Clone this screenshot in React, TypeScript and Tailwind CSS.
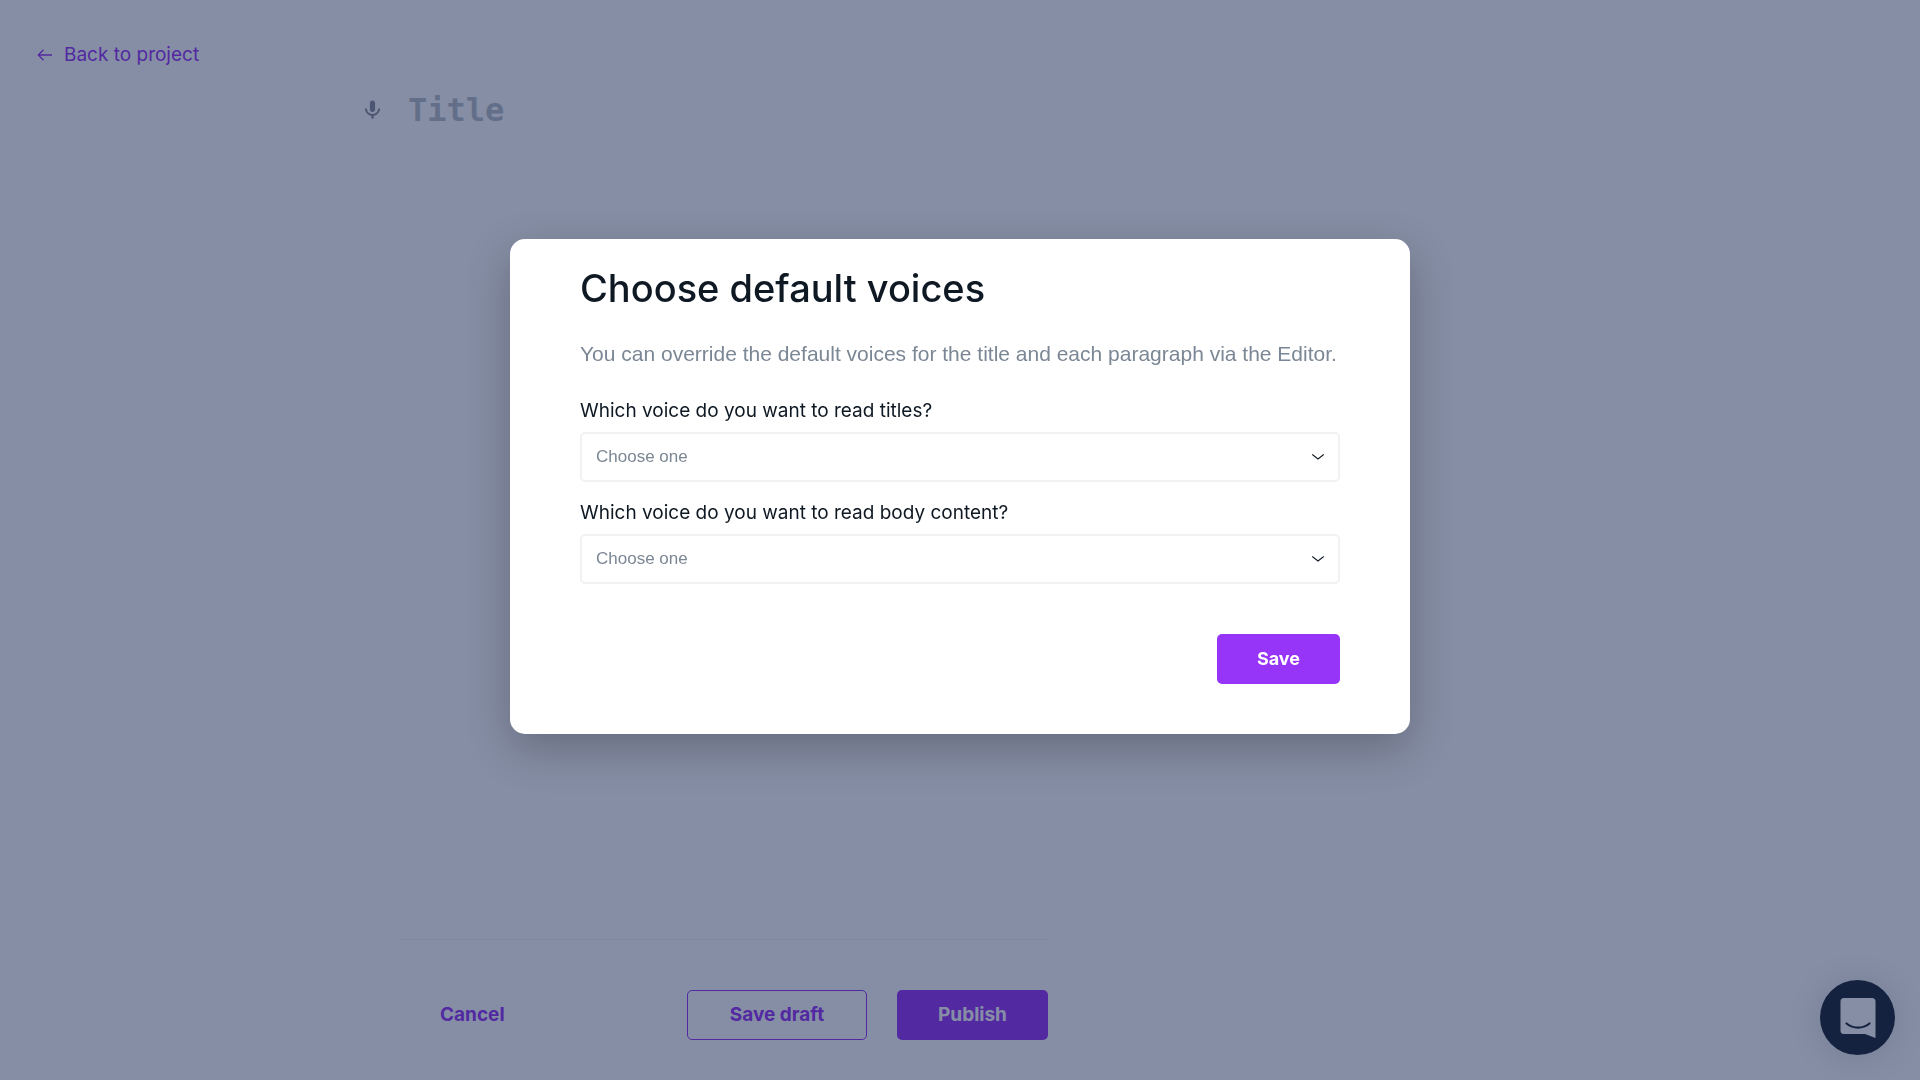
import { useState } from "react";

const voices = ["Joanna", "Matthew", "Amy"];

function ArrowLeftIcon() {
    return (
        <svg className="h-4 w-4" viewBox="0 0 16 16" fill="none" stroke="currentColor" strokeWidth="1.3" aria-hidden="true">
            <path d="M16 8H2.500M7.500 2.800L2.300 8L7.500 13.200" />
        </svg>
    );
}

function MicIcon() {
    return (
        <svg className="h-6 w-6" viewBox="0 0 24 24" fill="currentColor" aria-hidden="true">
            <path d="M12.500 14c1.600 0 2.600-1.200 2.600-2.800V5.300c0-1.600-1-2.800-2.600-2.800S9.900 3.700 9.900 5.300v5.900c0 1.600 1 2.800 2.600 2.800zM18 10.500c0 3.200-2.400 5.500-5.500 5.500S7 13.700 7 10.500H4.900c0 3.700 2.900 6.700 6.400 7.300V20.500h2.400v-2.700c3.500-.6 6.400-3.600 6.400-7.300z" />
        </svg>
    );
}

function ChatIcon() {
    return (
        <svg className="h-10 w-9" viewBox="0 0 36 40" aria-hidden="true">
            <path fill="#fff" d="M4 0h28a3.500 3.500 0 0 1 3.500 3.500V40L25 36H4a3.500 3.500 0 0 1-3.500-3.500v-29A3.500 3.500 0 0 1 4 0z" />
            <path fill="none" stroke="#1b2735" strokeWidth="2.2" strokeLinecap="round" d="M6.500 25.500c7 5.500 16 5.500 23 0" />
        </svg>
    );
}

function VoiceSelect({ id, label }: { id: string; label: string }) {
    const [voice, setVoice] = useState("");

    return (
        <div className="flex flex-col gap-2">
            <label htmlFor={id} className="font-['Inter',sans-serif] text-[19px] leading-[26px] text-[#0f1923]">{label}</label>
            <div className="relative">
                <select
                    id={id}
                    value={voice}
                    onChange={(e) => setVoice(e.target.value)}
                    className="h-[50px] w-full appearance-none rounded-[5px] border-2 border-[#f2f2f3] bg-white px-[14px] text-[17px] text-[#7b8794]"
                >
                    <option value="">Choose one</option>
                    {voices.map((v) => (
                        <option key={v} value={v}>{v}</option>
                    ))}
                </select>
                <svg className="pointer-events-none absolute top-1/2 right-4 h-2 w-3 -translate-y-1/2" viewBox="0 0 12 8" fill="none" stroke="#0f1923" strokeWidth="1.2" aria-hidden="true">
                    <path d="M.2 1.500L6 5.900L11.800 1.500" />
                </svg>
            </div>
        </div>
    );
}

function DefaultVoicesModal() {
    return (
        <div className="fixed inset-0 flex items-center justify-center bg-[#0d1d4b]/50 pb-[108px]">
            <div role="dialog" aria-modal="true" aria-labelledby="voices-title" className="w-full max-w-[900px] rounded-[15px] bg-white px-[70px] pt-[29px] pb-[50px] shadow-[0_15px_45px_rgba(0,0,0,0.24)]">
                <h2 id="voices-title" className="font-['Inter',sans-serif] text-[38px] leading-10 font-medium text-[#0f1923]">Choose default voices</h2>
                <p className="mt-8 text-[21px] leading-7 text-[#7b8794]">You can override the default voices for the title and each paragraph via the Editor.</p>
                <form className="mt-[30px] flex flex-col gap-[18px]" onSubmit={(e) => e.preventDefault()}>
                    <VoiceSelect id="title-voice" label="Which voice do you want to read titles?" />
                    <VoiceSelect id="body-voice" label="Which voice do you want to read body content?" />
                    <button type="submit" className="mt-8 h-[50px] self-end rounded-[5px] bg-[#9635f7] px-10 font-['Inter',sans-serif] text-lg font-bold text-white">Save</button>
                </form>
            </div>
        </div>
    );
}

function App() {
    return (
        <div className="flex min-h-screen flex-col bg-white font-['Liberation_Sans',sans-serif]">
            <header className="px-9 pt-[41px]">
                <a href="#" className="inline-flex items-center gap-3 font-['Inter',sans-serif] text-[19px] leading-7 text-[#9635f7]">
                    <ArrowLeftIcon />
                    Back to project
                </a>
            </header>

            <main className="flex flex-1 flex-col px-[360px]">
                <div className="mt-[15px] flex items-center gap-6">
                    <span className="text-[#8b8f98]"><MicIcon /></span>
                    <input
                        type="text"
                        placeholder="Title"
                        aria-label="Title"
                        className="min-w-0 flex-1 bg-transparent font-['DejaVu_Sans_Mono',monospace] text-[32px] leading-[50px] font-bold outline-none placeholder:text-[#b8bfc6]"
                    />
                </div>
            </main>

            <footer className="ml-[400px] flex w-full max-w-[648px] items-center border-t border-[#f2f2f3] pt-[50px] pb-10 font-['Inter',sans-serif] text-[19px] font-bold">
                <button type="button" className="h-[50px] px-10 text-[#9635f7]">Cancel</button>
                <button type="button" className="ml-auto h-[50px] min-w-[180px] rounded-[5px] border border-[#9635f7] px-10 text-[#9635f7]">Save draft</button>
                <button type="button" className="ml-[30px] h-[50px] min-w-[151px] rounded-[5px] bg-[#9635f7] px-10 text-white">Publish</button>
            </footer>

            <button type="button" aria-label="Open chat" className="fixed right-[25px] bottom-[25px] flex h-[75px] w-[75px] items-center justify-center rounded-full bg-[#1b2735] shadow-[0_2px_40px_rgba(0,0,0,0.15)]">
                <ChatIcon />
            </button>

            <DefaultVoicesModal />
        </div>
    );
}

export default App;
